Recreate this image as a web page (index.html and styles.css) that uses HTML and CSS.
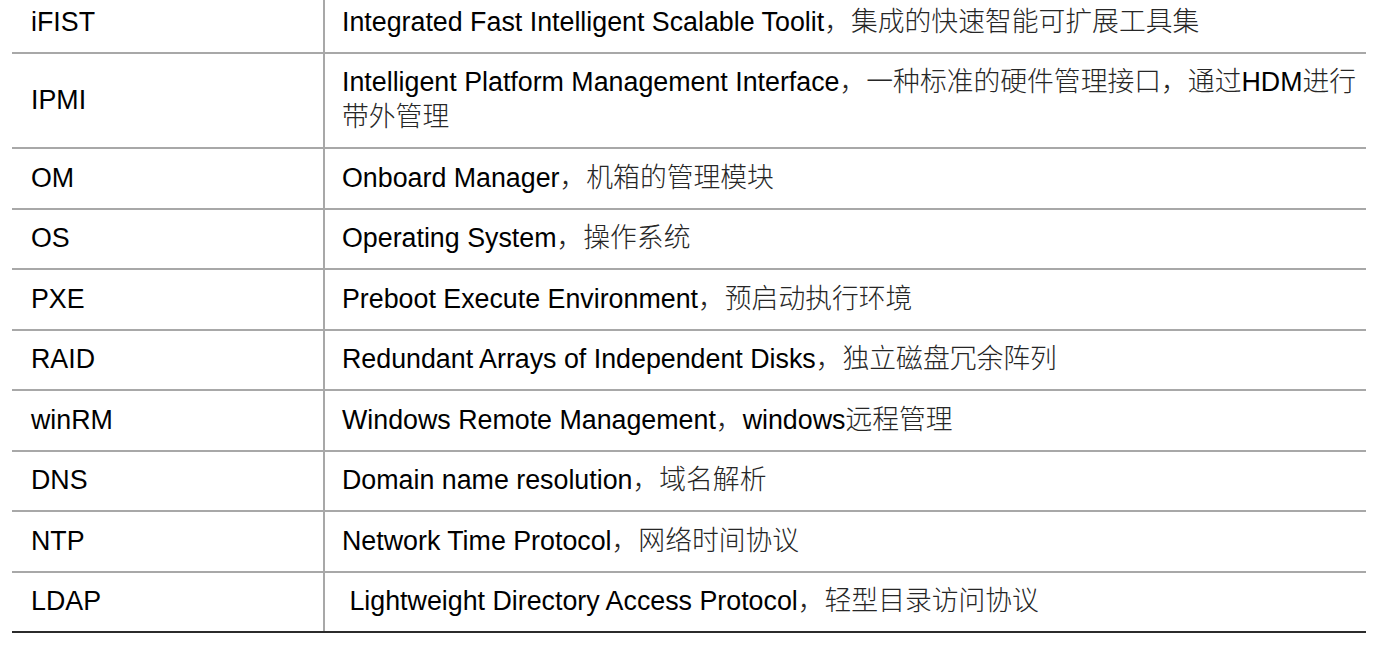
FILE: index.html
```html
<!DOCTYPE html>
<html lang="zh-CN">
<head>
<meta charset="utf-8">
<title>缩略语</title>
<link rel="stylesheet" href="styles.css">
</head>
<body>
<table class="abbr">
  <colgroup><col class="c-term"><col class="c-desc"></colgroup>
  <tbody>
    <tr><td class="term">iFIST</td><td class="desc">Integrated Fast Intelligent Scalable Toolit<span class="zh">，集成的快速智能可扩展工具集</span></td></tr>
    <tr><td class="term">IPMI</td><td class="desc">Intelligent Platform Management Interface<span class="zh">，一种标准的硬件管理接口，通过</span>HDM<span class="zh">进行</span> <span class="zh">带外管理</span></td></tr>
    <tr><td class="term">OM</td><td class="desc">Onboard Manager<span class="zh">，机箱的管理模块</span></td></tr>
    <tr><td class="term">OS</td><td class="desc">Operating System<span class="zh">，操作系统</span></td></tr>
    <tr><td class="term">PXE</td><td class="desc">Preboot Execute Environment<span class="zh">，预启动执行环境</span></td></tr>
    <tr><td class="term">RAID</td><td class="desc">Redundant Arrays of Independent Disks<span class="zh">，独立磁盘冗余阵列</span></td></tr>
    <tr><td class="term">winRM</td><td class="desc">Windows Remote Management<span class="zh">，</span>windows<span class="zh">远程管理</span></td></tr>
    <tr><td class="term">DNS</td><td class="desc">Domain name resolution<span class="zh">，域名解析</span></td></tr>
    <tr><td class="term">NTP</td><td class="desc">Network Time Protocol<span class="zh">，网络时间协议</span></td></tr>
    <tr class="last"><td class="term">LDAP</td><td class="desc">&nbsp;Lightweight Directory Access Protocol<span class="zh">，轻型目录访问协议</span></td></tr>
  </tbody>
</table>
</body>
</html>
```
FILE: styles.css
```css
html, body {
  margin: 0;
  padding: 0;
  background: #ffffff;
}

body {
  font-family: "Liberation Sans", Arial, "Noto Sans CJK SC", sans-serif;
  font-size: 26.8px;
  line-height: 35px;
  color: #000000;
  overflow: hidden;
}

.abbr {
  border-collapse: collapse;
  table-layout: fixed;
  width: 1354px;
  margin: -7px 0 0 12px;
}

.c-term { width: 312px; }
.c-desc { width: 1042px; }

.abbr td {
  padding: 11.75px 0 11.75px 17px;
  vertical-align: middle;
  border-bottom: 2px solid #a8a8a8;
  text-align: left;
}

.abbr td.term {
  padding-left: 19px;
  border-right: 2px solid #a8a8a8;
}

.abbr tr.last td {
  border-bottom: 2px solid #2b2b2b;
}

.zh {
  font-family: "Noto Sans CJK SC", sans-serif;
  font-weight: 300;
  line-height: 1;
  color: #262626;
}
```
